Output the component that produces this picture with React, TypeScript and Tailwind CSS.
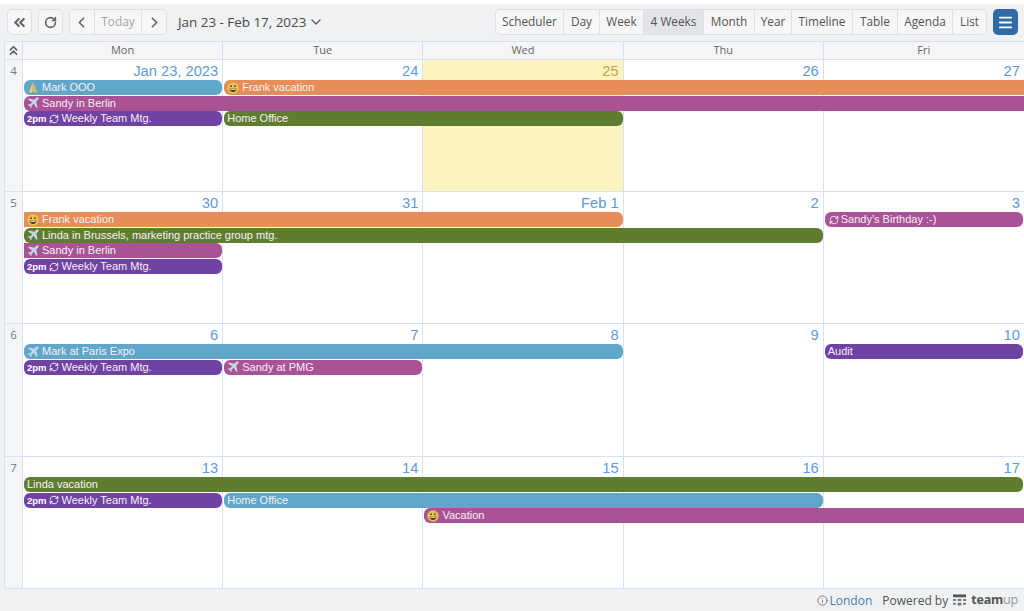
import React from "react";
import { ChevronDown, ChevronLeft, ChevronRight, ChevronsLeft, ChevronsUp, Info, Menu, RefreshCw, RotateCw } from "lucide-react";

type EventItem = {
  row: number;
  start: number;
  span: number;
  title: string;
  color: string;
  icon?: "smile" | "plane" | "pray" | "repeat";
  time?: boolean;
  flatLeft?: boolean;
  flatRight?: boolean;
};

type Week = { num: number; labels: string[]; events: EventItem[]; height: string };

const PURPLE = "bg-[#6f42a3]";
const MAGENTA = "bg-[#aa5296]";
const ORANGE = "bg-[#e68d58]";
const BLUE = "bg-[#5fa6c9]";
const GREEN = "bg-[#5f7d31]";

const weeks: Week[] = [
  {
    num: 4,
    height: "h-[132px]",
    labels: ["Jan 23, 2023", "24", "25", "26", "27"],
    events: [
      { row: 2, start: 1, span: 1, title: "Mark OOO", color: BLUE, icon: "pray" },
      { row: 2, start: 2, span: 4, title: "Frank vacation", color: ORANGE, icon: "smile", flatRight: true },
      { row: 3, start: 1, span: 5, title: "Sandy in Berlin", color: MAGENTA, icon: "plane", flatRight: true },
      { row: 4, start: 1, span: 1, title: "Weekly Team Mtg.", color: PURPLE, time: true },
      { row: 4, start: 2, span: 2, title: "Home Office", color: GREEN },
    ],
  },
  {
    num: 5,
    height: "h-[132px]",
    labels: ["30", "31", "Feb 1", "2", "3"],
    events: [
      { row: 2, start: 1, span: 3, title: "Frank vacation", color: ORANGE, icon: "smile", flatLeft: true },
      { row: 2, start: 5, span: 1, title: "Sandy's Birthday :-)", color: MAGENTA, icon: "repeat" },
      { row: 3, start: 1, span: 4, title: "Linda in Brussels, marketing practice group mtg.", color: GREEN, icon: "plane" },
      { row: 4, start: 1, span: 1, title: "Sandy in Berlin", color: MAGENTA, icon: "plane", flatLeft: true },
      { row: 5, start: 1, span: 1, title: "Weekly Team Mtg.", color: PURPLE, time: true },
    ],
  },
  {
    num: 6,
    height: "h-[133px]",
    labels: ["6", "7", "8", "9", "10"],
    events: [
      { row: 2, start: 1, span: 3, title: "Mark at Paris Expo", color: BLUE, icon: "plane" },
      { row: 2, start: 5, span: 1, title: "Audit", color: PURPLE },
      { row: 3, start: 1, span: 1, title: "Weekly Team Mtg.", color: PURPLE, time: true },
      { row: 3, start: 2, span: 1, title: "Sandy at PMG", color: MAGENTA, icon: "plane" },
    ],
  },
  {
    num: 7,
    height: "h-[132px]",
    labels: ["13", "14", "15", "16", "17"],
    events: [
      { row: 2, start: 1, span: 5, title: "Linda vacation", color: GREEN },
      { row: 3, start: 1, span: 1, title: "Weekly Team Mtg.", color: PURPLE, time: true },
      { row: 3, start: 2, span: 3, title: "Home Office", color: BLUE },
      { row: 4, start: 3, span: 3, title: "Vacation", color: MAGENTA, icon: "smile", flatRight: true },
    ],
  },
];

const views = [
  { name: "Scheduler", width: "w-[68px]" },
  { name: "Day", width: "w-[36px]" },
  { name: "Week", width: "w-[44px]" },
  { name: "4 Weeks", width: "w-[60px]" },
  { name: "Month", width: "w-[51px]" },
  { name: "Year", width: "w-[37px]" },
  { name: "Timeline", width: "w-[61px]" },
  { name: "Table", width: "w-[45px]" },
  { name: "Agenda", width: "w-[55px]" },
  { name: "List", width: "w-[33px]" },
];
const days = ["Mon", "Tue", "Wed", "Thu", "Fri"];

const colStart: Record<number, string> = {
  1: "col-start-2",
  2: "col-start-3",
  3: "col-start-4",
  4: "col-start-5",
  5: "col-start-6",
};
const colSpan: Record<number, string> = {
  1: "col-span-1",
  2: "col-span-2",
  3: "col-span-3",
  4: "col-span-4",
  5: "col-span-5",
};
const rowStart: Record<number, string> = {
  2: "row-start-2",
  3: "row-start-3",
  4: "row-start-4",
  5: "row-start-5",
};

const Smile = () => (
  <svg width="12" height="12" viewBox="0 0 13 13" className="shrink-0">
    <circle cx="6.5" cy="6.5" r="6.200" fill="#e8c24a" />
    <circle cx="4.4" cy="4.4" r="1" fill="#4a3a1a" />
    <circle cx="8.6" cy="4.4" r="1" fill="#4a3a1a" />
    <path d="M2.800 7h7.400c0 2.400-1.600 3.800-3.700 3.800S2.800 9.400 2.800 7z" fill="#4a3a1a" />
    <path d="M3.600 7.400h5.800v1H3.600z" fill="#fff" />
  </svg>
);

const Plane = () => (
  <svg width="12" height="12" viewBox="0 0 13 13" className="shrink-0">
    <path
      d="M12.400.6c-.7-.5-1.800-.2-2.500.5L8 3 2.200 1.500 1 2.700l4.600 2.900-2.400 2.500-1.700-.3-.8.800 2.300 1.300 1.300 2.300.8-.8-.3-1.700 2.500-2.400 2.900 4.600 1.200-1.200L10 5l1.900-1.900c.7-.7 1-1.800.5-2.500z"
      fill="#c3d6e6"
    />
  </svg>
);

const Pray = () => (
  <svg width="12" height="12" viewBox="0 0 13 13" className="shrink-0">
    <path d="M6.200 1C5.300 1.300 5 3 4.600 4.800 4.200 6.600 2.600 8.800 1.900 10.200l2.400 1.800 1.900-1.600z" fill="#f2cd6a" />
    <path d="M6.800 1c.9.300 1.200 2 1.600 3.800.4 1.800 2 4 2.700 5.400L8.700 12l-1.900-1.600z" fill="#e8bb50" />
  </svg>
);

const EventBar = ({ ev }: { ev: EventItem }) => (
  <div
    className={`${colStart[ev.start]} ${colSpan[ev.span]} ${rowStart[ev.row]} ${ev.color} ${
      ev.flatLeft ? "" : "rounded-l-[6px]"
    } ${ev.flatRight ? "mr-0" : "rounded-r-[6px] mr-px"} ml-px h-[15px] flex items-center pl-[3px] overflow-hidden whitespace-nowrap text-[11px] leading-[15px] text-[#f5f0f5] z-10`}
  >
    {ev.time ? (
      <>
        <span className="font-bold text-[9.500px] text-white">2pm</span>
        <RefreshCw size={10} strokeWidth={2.4} className="shrink-0 ml-[2px] mr-[3px]" />
      </>
    ) : null}
    {ev.icon === "repeat" ? <RefreshCw size={10} strokeWidth={2.4} className="shrink-0 ml-[1px] mr-[2px]" /> : null}
    {ev.icon === "smile" ? <Smile /> : null}
    {ev.icon === "plane" ? <Plane /> : null}
    {ev.icon === "pray" ? <Pray /> : null}
    <span className={ev.icon && ev.icon !== "repeat" ? "ml-[3px]" : ""}>{ev.title}</span>
  </div>
);

const WeekRow = ({ week }: { week: Week }) => (
  <div
    className={`${week.height} grid grid-cols-[18px_repeat(5,200.2px)] grid-rows-[20px_repeat(4,15.7px)_1fr] border-b border-[#d5e1fb]`}
  >
    <div className="col-start-1 row-start-1 row-span-6 border-r border-[#d5e1fb] bg-[#f5f5f6] pt-[2px] text-center font-['Open_Sans',sans-serif] text-[11.500px] text-[#777]">
      {week.num}
    </div>
    {week.labels.map((label, i) => (
      <div
        key={label}
        className={`${colStart[i + 1]} row-start-1 row-span-6 ${i < 4 ? "border-r border-[#d5e1fb]" : ""} ${
          label === "25" ? "bg-[#fcf3c1] text-[#c4a348]" : "bg-white text-[#5b9bdc]"
        } pr-[4px] text-right text-[14.700px] leading-[22px]`}
      >
        {label}
      </div>
    ))}
    {week.events.map((ev) => (
      <EventBar key={ev.title + ev.row + ev.start} ev={ev} />
    ))}
  </div>
);

const App = () => {
  return (
    <div className="h-[611px] w-[1024px] overflow-hidden bg-white font-['Liberation_Sans',sans-serif]">
      <div className="mt-[4px] h-[607px] bg-[#eff1f3] pl-[4px]">
        {/* toolbar */}
        <div className="flex h-[37px] items-start justify-between pr-[6px] pt-[5px] pl-[3px] font-['Open_Sans',sans-serif] text-[11.800px] text-[#555]">
          <div className="flex items-center">
            <button className="flex h-[26px] w-[25px] items-center justify-center rounded-[5px] border border-[#dfe1e4] bg-[#f6f6f7] text-[#666]">
              <ChevronsLeft size={17} strokeWidth={3} />
            </button>
            <button className="ml-[6px] flex h-[26px] w-[25px] items-center justify-center rounded-[5px] border border-[#dfe1e4] bg-[#f6f6f7] text-[#666]">
              <RotateCw size={13} strokeWidth={3} />
            </button>
            <div className="ml-[6px] flex h-[26px] items-center rounded-[5px] border border-[#dfe1e4] bg-[#f6f6f7]">
              <span className="flex h-full w-[25px] items-center justify-center border-r border-[#dfe1e4] pr-[2px] text-[#666]">
                <ChevronLeft size={17} strokeWidth={2.4} />
              </span>
              <span className="flex h-full w-[47px] items-center justify-center border-r border-[#dfe1e4] text-[#a3a5a8]">
                Today
              </span>
              <span className="flex h-full w-[24px] items-center justify-center text-[#666]">
                <ChevronRight size={17} strokeWidth={2.4} />
              </span>
            </div>
            <span className="ml-[11px] text-[13.400px] text-[#4a4a4a]">Jan 23 - Feb 17, 2023</span>
            <ChevronDown size={16} strokeWidth={1.8} className="ml-[2px] text-[#555]" />
          </div>
          <div className="flex items-center gap-[6px]">
            <div className="flex h-[26px] rounded-[5px] border border-[#dfe1e4] bg-[#f6f6f7]">
              {views.map((v, i) => (
                <span
                  key={v.name}
                  className={`flex items-center justify-center ${v.width} ${
                    i < views.length - 1 ? "border-r border-[#dfe1e4]" : ""
                  } ${v.name === "4 Weeks" ? "bg-[#e2e4e7]" : ""}`}
                >
                  {v.name}
                </span>
              ))}
            </div>
            <button className="flex h-[26px] w-[25px] items-center justify-center rounded-[5px] bg-[#2f6ba8] text-white">
              <Menu size={17} strokeWidth={2.5} />
            </button>
          </div>
        </div>
        {/* calendar */}
        <div className="w-[1020px] border-t border-l border-[#d5e1fb]">
          <div className="grid h-[18px] grid-cols-[18px_repeat(5,200.2px)] border-b border-[#d5e1fb] bg-[#f5f5f6] font-['Open_Sans',sans-serif] text-[11px] text-[#666]">
            <div className="flex items-center justify-center border-r border-[#d5e1fb] text-[#666]">
              <ChevronsUp size={15} strokeWidth={2.8} />
            </div>
            {days.map((d, i) => (
              <div key={d} className={`flex items-center justify-center ${i < 4 ? "border-r border-[#d5e1fb]" : ""}`}>
                {d}
              </div>
            ))}
          </div>
          {weeks.map((w) => (
            <WeekRow key={w.num} week={w} />
          ))}
        </div>
        {/* footer */}
        <div className="flex h-[23px] items-center justify-end gap-[10px] pr-[6px] font-['Open_Sans',sans-serif] text-[12px] text-[#555]">
          <span className="flex items-center gap-[2px] text-[#4a7fb5]">
            <Info size={11} className="text-[#777]" />
            London
          </span>
          <span className="flex items-center gap-[5px]">
            Powered by
            <svg width="13" height="13" viewBox="0 0 14 13">
              <path d="M0 0h14v3H0z" fill="#555" />
              <path d="M0 5h3v2H0zM5 5h4v2H5zM11 5h3v2h-3zM0 9h3v2H0zM5 9h4v3H5zM11 9h3v2h-3z" fill="#777" />
            </svg>
            <span className="text-[12.500px] font-bold tracking-[-0.2px]">
              team<span className="font-normal text-[#999]">up</span>
            </span>
          </span>
        </div>
      </div>
    </div>
  );
};

export default App;
